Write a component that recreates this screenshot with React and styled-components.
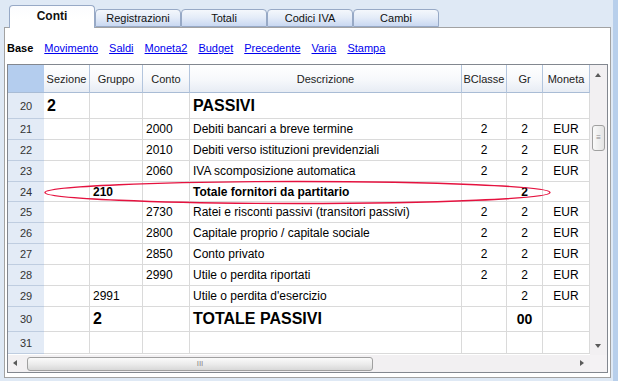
import React from "react";
import styled, { createGlobalStyle } from "styled-components";

const GlobalStyle = createGlobalStyle`
  html, body {
    margin: 0;
    padding: 0;
    background: #dfe9f5;
  }
  body {
    font-family: "Liberation Sans", Arial, sans-serif;
  }
`;

const COLS = "36px 46px 53px 47px 272px 45px 36px 47px";

const Window = styled.div`
  position: relative;
  width: 618px;
  height: 381px;
  display: flex;
  overflow: hidden;
  background: #dfe9f5;
`;

const Main = styled.div`
  width: 613px;
  padding: 5px 2px 0 4px;
  box-sizing: border-box;
  display: flex;
  flex-direction: column;
`;

const RightStrip = styled.div`
  width: 5px;
  background: #b8cfeb;
`;

const TabBar = styled.div`
  height: 22px;
  display: flex;
  align-items: flex-end;
  padding-left: 5px;
`;

const Tab = styled.div`
  position: relative;
  z-index: ${(p) => (p.$active ? 2 : 1)};
  width: 86px;
  box-sizing: border-box;
  height: ${(p) => (p.$active ? "23px" : "18px")};
  margin-bottom: ${(p) => (p.$active ? "-1px" : "0")};
  border: 1px solid #97a9c6;
  border-bottom: ${(p) => (p.$active ? "none" : "1px solid #97a9c6")};
  border-radius: 4px 4px 0 0;
  background: ${(p) =>
    p.$active
      ? "linear-gradient(#fbfcfe, #ffffff 60%, #ffffff)"
      : "linear-gradient(#f4f7fc, #e3ebf8 50%, #c9d8f1)"};
  display: flex;
  align-items: center;
  justify-content: center;
  font-size: ${(p) => (p.$active ? "12px" : "11px")};
  font-weight: ${(p) => (p.$active ? "bold" : "normal")};
  color: #111;
  padding-bottom: ${(p) => (p.$active ? "2px" : "0")};
`;

const Panel = styled.div`
  width: 607px;
  height: 351px;
  box-sizing: border-box;
  border: 1px solid #a2a2a2;
  background: #ffffff;
  display: flex;
  flex-direction: column;
`;

const SubNav = styled.div`
  height: 36px;
  box-sizing: border-box;
  padding: 4px 0 0 2px;
  display: flex;
  align-items: center;
  gap: 11px;
  font-size: 11px;
`;

const NavCurrent = styled.span`
  font-weight: bold;
  color: #000;
`;

const NavLink = styled.a`
  color: #0000ee;
  text-decoration: underline;
  cursor: pointer;
`;

const Frame = styled.div`
  margin-left: 2px;
  width: 601px;
  height: 309px;
  box-sizing: border-box;
  border: 1px solid #82878f;
  display: flex;
  flex-direction: column;
`;

const FrameTop = styled.div`
  display: flex;
  height: 290px;
`;

const FrameBottom = styled.div`
  display: flex;
  height: 17px;
`;

const Table = styled.div`
  width: 582px;
  display: flex;
  flex-direction: column;
`;

const Row = styled.div`
  display: grid;
  grid-template-columns: ${COLS};
  height: ${(p) => p.$h}px;
`;

const HeadCell = styled.div`
  box-sizing: border-box;
  border-right: 1px solid #b3c5dd;
  border-bottom: 1px solid #a9bcd5;
  background: ${(p) =>
    p.$corner ? "#b4cdee" : "linear-gradient(#ffffff, #f6f8fb 55%, #e7ecf4)"};
  display: flex;
  align-items: center;
  justify-content: center;
  font-size: 11px;
  color: #222;
  ${(p) => p.$corner && "border-right: none;"}
`;

const RowNum = styled.div`
  box-sizing: border-box;
  background: #e3ebf6;
  border-bottom: 1px solid #bfcde0;
  display: flex;
  align-items: center;
  justify-content: center;
  font-size: 11px;
  color: #333;
`;

const Cell = styled.div`
  box-sizing: border-box;
  border-right: 1px solid #dadada;
  border-bottom: 1px solid #dadada;
  display: flex;
  align-items: center;
  justify-content: ${(p) => (p.$center ? "center" : "flex-start")};
  padding: 0 3px;
  white-space: nowrap;
  overflow: hidden;
  color: #000;
  font-size: ${(p) => (p.$size ? p.$size : 12)}px;
  font-weight: ${(p) => (p.$bold ? "bold" : "normal")};
`;

const VScroll = styled.div`
  position: relative;
  width: 17px;
  background: #f2f0f2;
`;

const HScroll = styled.div`
  position: relative;
  width: 582px;
  background: #f2f0f2;
`;

const Corner = styled.div`
  width: 17px;
  background: #f4f2f4;
`;

const Arrow = styled.span`
  position: absolute;
  width: 0;
  height: 0;
  border: 3px solid transparent;
  ${(p) => p.$dir === "up" && "border-bottom: 4px solid #5a5a5a; border-top: none; left: 5px; top: 8px;"}
  ${(p) => p.$dir === "down" && "border-top: 4px solid #5a5a5a; border-bottom: none; left: 5px; bottom: 7px;"}
  ${(p) => p.$dir === "left" && "border-right: 4px solid #5a5a5a; border-left: none; left: 5px; top: 5px;"}
  ${(p) => p.$dir === "right" && "border-left: 4px solid #5a5a5a; border-right: none; right: 6px; top: 5px;"}
`;

const Thumb = styled.div`
  position: absolute;
  box-sizing: border-box;
  border: 1px solid #a0a0a0;
  border-radius: 3px;
  display: flex;
  align-items: center;
  justify-content: center;
  color: #8a8a8a;
  font-size: 8px;
  line-height: 1;
  ${(p) =>
    p.$vertical
      ? `left: 2px; top: 60px; width: 13px; height: 26px;
         background: linear-gradient(90deg, #fafafa, #e4e4e4);`
      : `left: 19px; top: 2px; width: 346px; height: 14px;
         background: linear-gradient(#fbfbfb, #ececec 50%, #d8d8d8);`}
`;

const Overlay = styled.svg`
  position: absolute;
  left: 0;
  top: 0;
  pointer-events: none;
`;

const tabs = ["Conti", "Registrazioni", "Totali", "Codici IVA", "Cambi"];
const links = ["Movimento", "Saldi", "Moneta2", "Budget", "Precedente", "Varia", "Stampa"];
const headers = ["Sezione", "Gruppo", "Conto", "Descrizione", "BClasse", "Gr", "Moneta"];

const std = (n, conto, desc) => ({ n, h: 21, conto, desc, bc: "2", gr: "2", mon: "EUR" });

const rows = [
  { n: 20, h: 26, sez: "2", desc: "PASSIVI", big: true },
  std(21, "2000", "Debiti bancari a breve termine"),
  std(22, "2010", "Debiti verso istituzioni previdenziali"),
  std(23, "2060", "IVA scomposizione automatica"),
  { n: 24, h: 20, grp: "210", desc: "Totale fornitori da partitario", gr: "2", bold: true },
  std(25, "2730", "Ratei e risconti passivi (transitori passivi)"),
  std(26, "2800", "Capitale proprio / capitale sociale"),
  std(27, "2850", "Conto privato"),
  std(28, "2990", "Utile o perdita riportati"),
  { n: 29, h: 21, grp: "2991", desc: "Utile o perdita d'esercizio", gr: "2", mon: "EUR" },
  { n: 30, h: 25, grp: "2", desc: "TOTALE PASSIVI", gr: "00", big: true },
  { n: 31, h: 22 },
];

function DataRow({ r }) {
  const size = r.big ? 16 : 12;
  const bold = r.big || r.bold;
  return (
    <Row $h={r.h}>
      <RowNum>{r.n}</RowNum>
      <Cell $size={size} $bold={bold}>{r.sez}</Cell>
      <Cell $size={size} $bold={bold}>{r.grp}</Cell>
      <Cell $size={size} $bold={bold}>{r.conto}</Cell>
      <Cell $size={size} $bold={bold}>{r.desc}</Cell>
      <Cell $center $bold={bold}>{r.bc}</Cell>
      <Cell $center $size={r.big ? 14 : 12} $bold={bold}>{r.gr}</Cell>
      <Cell $center>{r.mon}</Cell>
    </Row>
  );
}

export default function App() {
  return (
    <>
      <GlobalStyle />
      <Window>
        <Main>
          <TabBar>
            {tabs.map((t, i) => (
              <Tab key={t} $active={i === 0}>{t}</Tab>
            ))}
          </TabBar>
          <Panel>
            <SubNav>
              <NavCurrent>Base</NavCurrent>
              {links.map((l) => (
                <NavLink key={l}>{l}</NavLink>
              ))}
            </SubNav>
            <Frame>
              <FrameTop>
                <Table>
                  <Row $h={28}>
                    <HeadCell $corner />
                    {headers.map((h) => (
                      <HeadCell key={h}>{h}</HeadCell>
                    ))}
                  </Row>
                  {rows.map((r) => (
                    <DataRow key={r.n} r={r} />
                  ))}
                </Table>
                <VScroll>
                  <Arrow $dir="up" />
                  <Thumb $vertical>≡</Thumb>
                  <Arrow $dir="down" />
                </VScroll>
              </FrameTop>
              <FrameBottom>
                <HScroll>
                  <Arrow $dir="left" />
                  <Thumb>III</Thumb>
                  <Arrow $dir="right" />
                </HScroll>
                <Corner />
              </FrameBottom>
            </Frame>
          </Panel>
        </Main>
        <RightStrip />
        <Overlay width="618" height="381" viewBox="0 0 618 381">
          <ellipse cx="297.5" cy="192.5" rx="252.5" ry="11" fill="none" stroke="#e5123f" strokeWidth="1.4" />
        </Overlay>
      </Window>
    </>
  );
}
